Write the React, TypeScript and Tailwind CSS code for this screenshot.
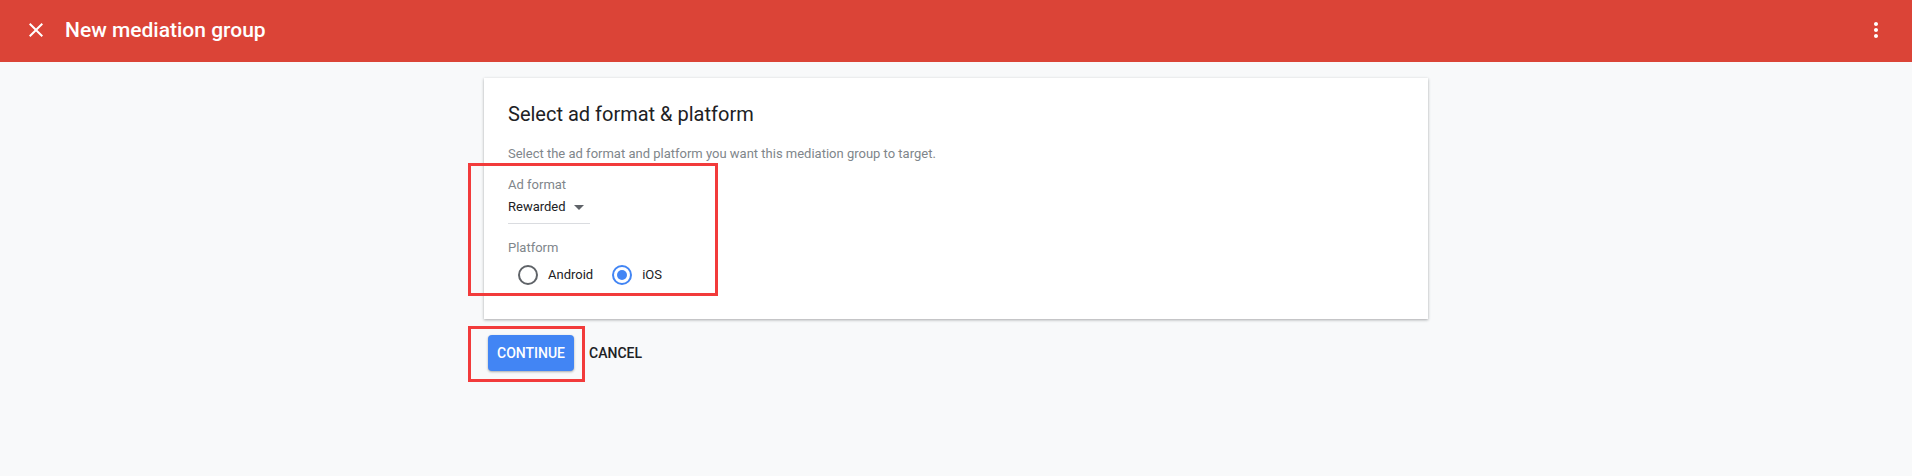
const CloseIcon = () => (
  <svg width="24" height="24" viewBox="0 0 24 24" fill="white">
    <path d="M19 6.41L17.59 5 12 10.59 6.41 5 5 6.41 10.59 12 5 17.59 6.41 19 12 13.41 17.59 19 19 17.59 13.41 12z" />
  </svg>
);

const MoreIcon = () => (
  <svg width="24" height="24" viewBox="0 0 24 24" fill="white">
    <path d="M12 8c1.1 0 2-.9 2-2s-.9-2-2-2-2 .9-2 2 .9 2 2 2zm0 2c-1.1 0-2 .9-2 2s.9 2 2 2 2-.9 2-2-.9-2-2-2zm0 6c-1.1 0-2 .9-2 2s.9 2 2 2 2-.9 2-2-.9-2-2-2z" />
  </svg>
);

const Radio = ({ label, checked }: { label: string; checked?: boolean }) => (
  <label className="flex items-center gap-[10px] cursor-pointer">
    <span
      className={`w-[20px] h-[20px] rounded-full border-2 flex items-center justify-center ${
        checked ? "border-[#4285f4]" : "border-[#5f6368]"
      }`}
    >
      {checked && <span className="w-[10px] h-[10px] rounded-full bg-[#4285f4]" />}
    </span>
    <span className="text-[13px] leading-[20px] text-[#202124]">{label}</span>
  </label>
);

export default function App() {
  return (
    <div className="min-h-screen bg-[#f8f9fa] font-['Roboto',sans-serif]">
      <header className="h-[62px] bg-[#db4437] flex items-center pl-[24px] pr-[24px]">
        <button className="w-[24px] h-[24px] mt-[-2px]">
          <CloseIcon />
        </button>
        <h1 className="ml-[17px] text-white text-[21px] font-medium leading-[28px] mt-[-2px]">
          New mediation group
        </h1>
        <div className="ml-auto mt-[-2px]">
          <MoreIcon />
        </div>
      </header>

      <main className="w-[944px] mx-auto mt-[16px] relative">
        <section className="bg-white shadow-[0_1px_3px_rgba(60,64,67,0.3),0_1px_2px_rgba(60,64,67,0.15)] pt-[22px] pl-[24px] pb-[34px]">
          <h2 className="text-[20px] leading-[28px] text-[#202124]">Select ad format &amp; platform</h2>
          <p className="mt-[18px] text-[13px] leading-[16px] text-[#80868b]">
            Select the ad format and platform you want this mediation group to target.
          </p>

          <div className="mt-[15px] text-[13px] leading-[16px] text-[#80868b]">Ad format</div>
          <div className="mt-[4px] w-[82px] flex items-center border-b border-[#dadce0] pb-[6px]">
            <span className="text-[13px] leading-[20px] text-[#202124]">Rewarded</span>
            <svg width="10" height="5" viewBox="0 0 10 5" className="ml-[8px]">
              <path d="M0 0l5 5 5-5z" fill="#5f6368" />
            </svg>
          </div>

          <div className="mt-[16px] text-[13px] leading-[16px] text-[#80868b]">Platform</div>
          <div className="mt-[9px] ml-[10px] flex items-center gap-[19px]">
            <Radio label="Android" />
            <Radio label="iOS" checked />
          </div>
        </section>

        <div className="mt-[16px] ml-[4px] flex items-center gap-[15px]">
          <button className="h-[36px] px-[9px] rounded-[4px] bg-[#4285f4] text-white text-[14px] font-medium shadow-[0_1px_2px_rgba(60,64,67,0.3),0_1px_3px_rgba(60,64,67,0.15)]">
            CONTINUE
          </button>
          <button className="text-[14px] font-medium text-[#202124]">CANCEL</button>
        </div>

        <div className="absolute left-[-16px] top-[85px] w-[250px] h-[133px] border-[3px] border-[#f23b3b] pointer-events-none" />
        <div className="absolute left-[-16px] top-[248px] w-[117px] h-[56px] border-[3px] border-[#f23b3b] pointer-events-none" />
      </main>
    </div>
  );
}
